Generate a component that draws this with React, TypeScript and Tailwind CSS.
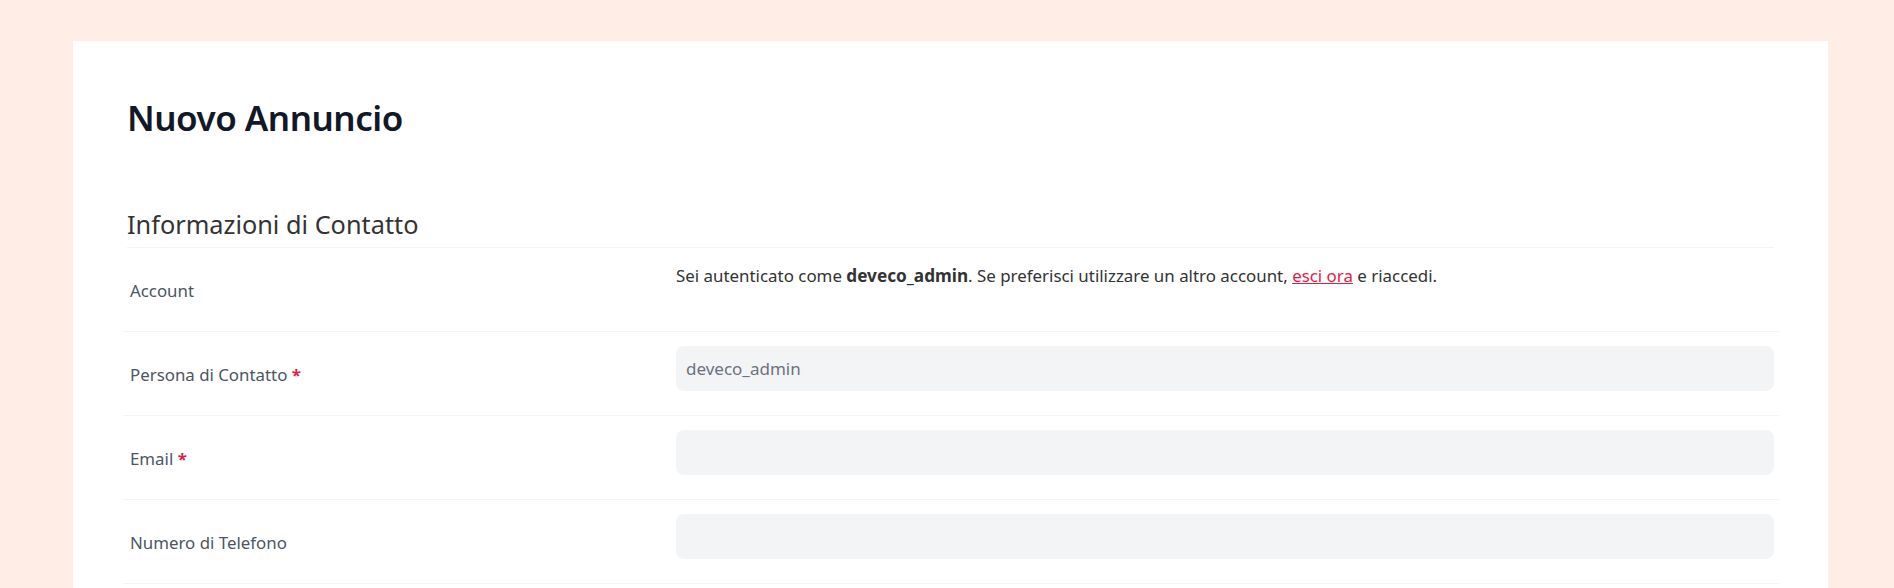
import React from "react";

function Req() {
  return <span className="font-bold text-[#e11d48]"> *</span>;
}

function Row({ label, required, children }: { label: string; required?: boolean; children: React.ReactNode }) {
  return (
    <div className="-ml-[4px] -mr-[5px] flex h-[84px] border-b border-[#f3f4f6]">
      <label className="w-[553px] shrink-0 pl-[7px] pt-[31px] text-[16.85px] leading-6 text-[#4b5563]">
        {label}
        {required && <Req />}
      </label>
      <div className="flex-1 pr-[5px]">{children}</div>
    </div>
  );
}

function Field({ value }: { value?: string }) {
  return (
    <div className="mt-[14px] h-[45px] rounded-lg bg-[#f3f4f6] px-[10px] text-[17px] leading-[45px] text-[#6b7280]">
      {value}
    </div>
  );
}

export default function App() {
  return (
    <div className="h-[588px] overflow-hidden bg-[#ffede6] pl-[73px] pr-[66px] pt-[41px] font-['Noto_Sans',sans-serif]">
      <main className="bg-white px-[54px] pt-[57px] pb-10">
        <h1 className="text-[35px] font-semibold leading-10 tracking-[-0.5px] text-[#111827]">Nuovo Annuncio</h1>
        <h2 className="mt-[70px] border-b border-[#f3f4f6] pb-[7px] text-[25.3px] leading-8 text-[#333333]">
          Informazioni di Contatto
        </h2>
        <div className="-ml-[4px] -mr-[5px] flex h-[84px] border-b border-[#f3f4f6]">
          <span className="w-[553px] shrink-0 pl-[7px] pt-[31px] text-[16.85px] leading-6 text-[#4b5563]">Account</span>
          <p className="flex-1 pr-[5px] pt-4 text-[16.9px] leading-6 text-[#333333]">
            Sei autenticato come <strong className="text-[17.2px] font-bold">deveco_admin</strong>. Se preferisci
            utilizzare un altro account,{" "}
            <a href="#" className="text-[#e11d48] underline">
              esci ora
            </a>{" "}
            e riaccedi.
          </p>
        </div>
        <Row label="Persona di Contatto" required>
          <Field value="deveco_admin" />
        </Row>
        <Row label="Email" required>
          <Field />
        </Row>
        <Row label="Numero di Telefono">
          <Field />
        </Row>
      </main>
    </div>
  );
}
